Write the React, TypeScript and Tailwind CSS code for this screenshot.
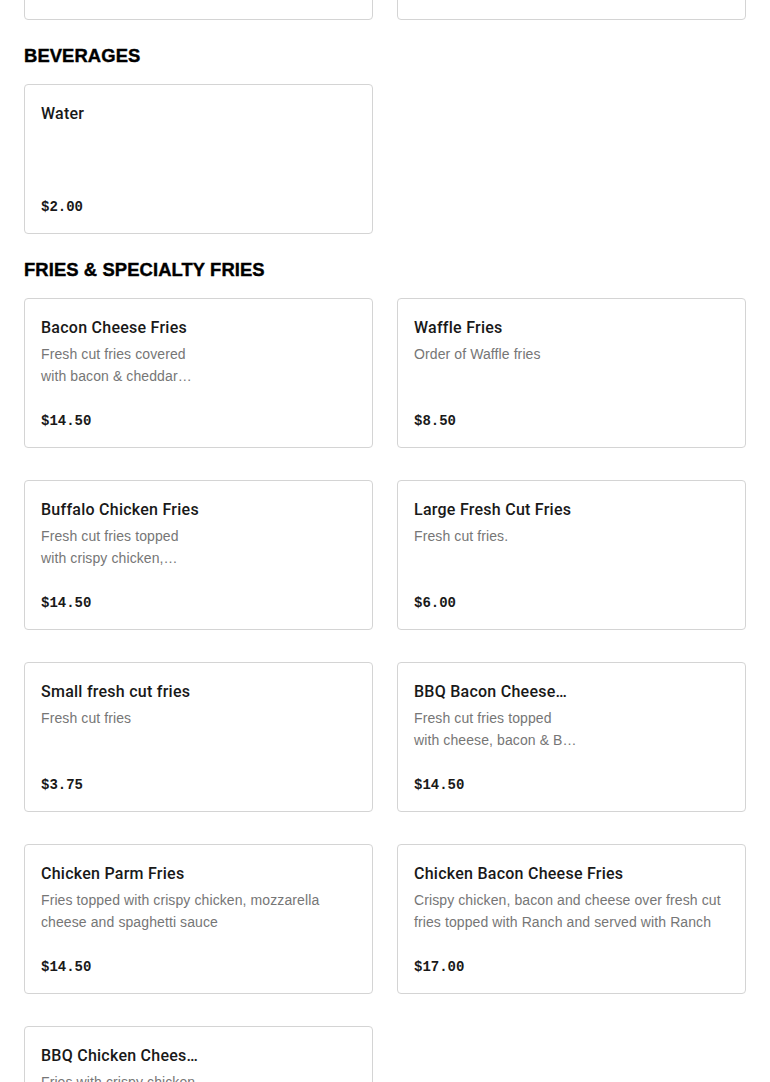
import React from "react";

type Item = { title: string; lines: string[]; price: string };

const prevRow: Item[] = [
  { title: "", lines: [], price: "$0.00" },
  { title: "", lines: [], price: "$0.00" },
];

const beverages: Item[] = [{ title: "Water", lines: [], price: "$2.00" }];

const fries: Item[] = [
  { title: "Bacon Cheese Fries", lines: ["Fresh cut fries covered", "with bacon & cheddar…"], price: "$14.50" },
  { title: "Waffle Fries", lines: ["Order of Waffle fries"], price: "$8.50" },
  { title: "Buffalo Chicken Fries", lines: ["Fresh cut fries topped", "with crispy chicken,…"], price: "$14.50" },
  { title: "Large Fresh Cut Fries", lines: ["Fresh cut fries."], price: "$6.00" },
  { title: "Small fresh cut fries", lines: ["Fresh cut fries"], price: "$3.75" },
  { title: "BBQ Bacon Cheese…", lines: ["Fresh cut fries topped", "with cheese, bacon & B…"], price: "$14.50" },
  { title: "Chicken Parm Fries", lines: ["Fries topped with crispy chicken, mozzarella", "cheese and spaghetti sauce"], price: "$14.50" },
  { title: "Chicken Bacon Cheese Fries", lines: ["Crispy chicken, bacon and cheese over fresh cut", "fries topped with Ranch and served with Ranch"], price: "$17.00" },
  { title: "BBQ Chicken Chees…", lines: ["Fries with crispy chicken,", "cheese and BBQ sauce"], price: "$14.50" },
];

function Card({ item }: { item: Item }) {
  return (
    <div className="h-[150px] rounded-[4px] border border-[#d4d4d4] bg-white px-4 pt-[17px] pb-4 flex flex-col justify-between">
      <div>
        <div className="text-[16px] leading-6 font-medium tracking-[0.25px] text-[#191919] whitespace-nowrap [font-family:Roboto,'Liberation_Sans',sans-serif]">
          {item.title}
        </div>
        <div className="mt-[3px] text-[14px] leading-[22px] tracking-[0.1px] text-[#767676] [font-family:'Liberation_Sans',Arial,sans-serif]">
          {item.lines.map((l, i) => (
            <div key={i} className="whitespace-nowrap">{l}</div>
          ))}
        </div>
      </div>
      <div className="text-[14px] leading-5 font-bold text-[#191919] [font-family:'Liberation_Mono',monospace]">
        {item.price}
      </div>
    </div>
  );
}

function Grid({ items, className = "" }: { items: Item[]; className?: string }) {
  return (
    <div className={"grid grid-cols-2 gap-x-6 gap-y-8 " + className}>
      {items.map((it, i) => (
        <Card key={i} item={it} />
      ))}
    </div>
  );
}

function Heading({ children }: { children: React.ReactNode }) {
  return (
    <h2 className="mt-[24px] mb-[16px] text-[18.4px] leading-6 font-bold tracking-[0.1px] text-black uppercase [font-family:'Liberation_Sans',Arial,sans-serif] [-webkit-text-stroke:0.4px_black]">
      {children}
    </h2>
  );
}

export default function App() {
  return (
    <div className="min-h-screen bg-white px-6 overflow-hidden">
      <Grid items={prevRow} className="-mt-[130px]" />
      <Heading>Beverages</Heading>
      <Grid items={beverages} />
      <Heading>Fries &amp; Specialty Fries</Heading>
      <Grid items={fries} />
    </div>
  );
}
